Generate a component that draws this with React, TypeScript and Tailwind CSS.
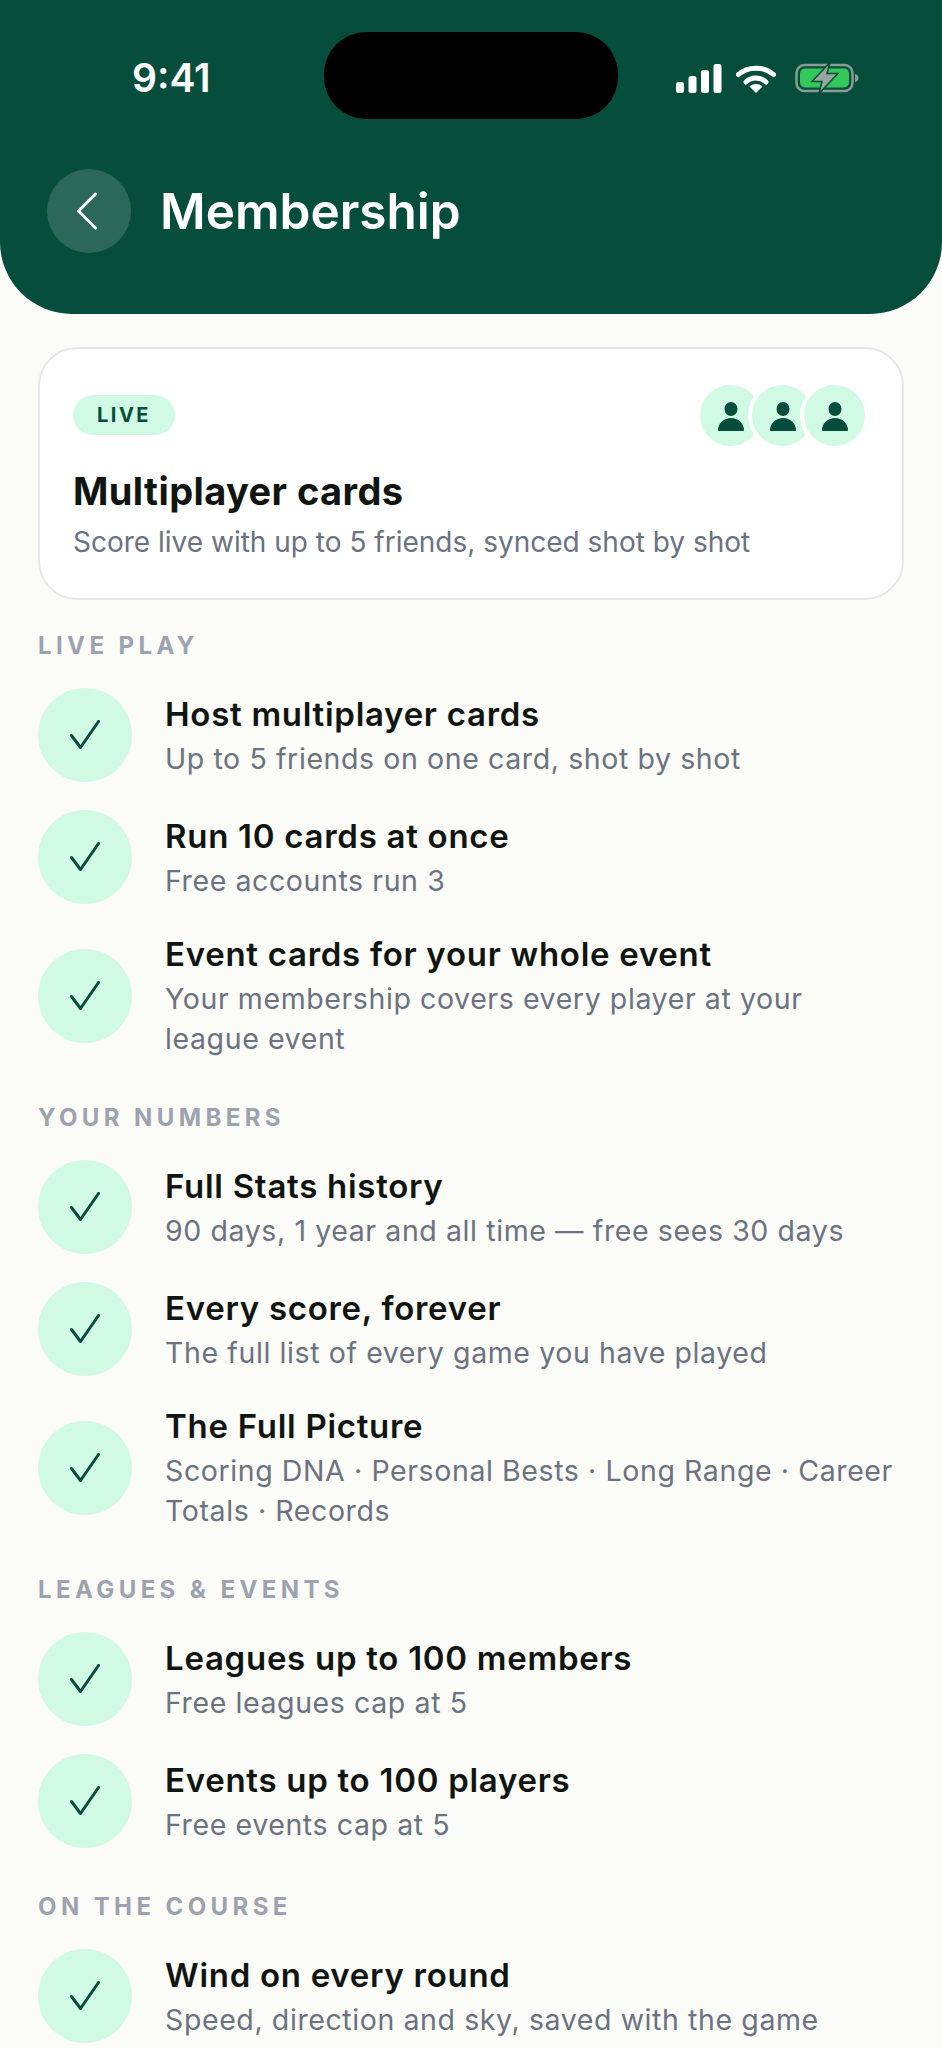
const sections = [
  {
    label: 'LIVE PLAY',
    rows: [
      { title: 'Host multiplayer cards', sub: 'Up to 5 friends on one card, shot by shot' },
      { title: 'Run 10 cards at once', sub: 'Free accounts run 3' },
      { title: 'Event cards for your whole event', sub: 'Your membership covers every player at your league event' },
    ],
  },
  {
    label: 'YOUR NUMBERS',
    rows: [
      { title: 'Full Stats history', sub: '90 days, 1 year and all time — free sees 30 days' },
      { title: 'Every score, forever', sub: 'The full list of every game you have played' },
      { title: 'The Full Picture', sub: 'Scoring DNA · Personal Bests · Long Range · Career Totals · Records' },
    ],
  },
  {
    label: 'LEAGUES & EVENTS',
    rows: [
      { title: 'Leagues up to 100 members', sub: 'Free leagues cap at 5' },
      { title: 'Events up to 100 players', sub: 'Free events cap at 5' },
    ],
  },
  {
    label: 'ON THE COURSE',
    rows: [{ title: 'Wind on every round', sub: 'Speed, direction and sky, saved with the game' }],
  },
];

function StatusIcons() {
  return (
    <div className="flex items-center">
      <svg width="46" height="29" viewBox="0 0 46 29" fill="#fff">
        <rect x="0" y="18" width="8" height="11" rx="2.500" />
        <rect x="12.500" y="12" width="8" height="17" rx="2.500" />
        <rect x="25" y="6" width="8" height="23" rx="2.500" />
        <rect x="37.500" y="0" width="8" height="29" rx="2.500" />
      </svg>
      <svg width="40" height="29" viewBox="0 0 40 29" fill="none" className="ml-[14px]">
        <path d="M2.500 10.500C11.500 2 28.500 2 37.500 10.500" stroke="#fff" strokeWidth="5" strokeLinecap="round" />
        <path d="M10 18C15.500 12.800 24.500 12.800 30 18" stroke="#fff" strokeWidth="5" strokeLinecap="round" />
        <path d="M20 29L13.500 22.500C17 19.300 23 19.300 26.500 22.500Z" fill="#fff" />
      </svg>
      <svg width="64" height="32" viewBox="0 0 64 32" fill="none" className="ml-[19px]">
        <rect x="1.500" y="3" width="56" height="26" rx="8" stroke="#8a9a94" strokeWidth="2.500" />
        <rect x="5" y="6.500" width="49" height="19" rx="5" fill="#34c759" />
        <path d="M60 12c2.500.5 3.500 2 3.500 4s-1 3.500-3.500 4z" fill="#8a9a94" />
        <path d="M35 .5L17 19.500h10L24 31.500L43 11.500H32z" fill="#9aa5a1" stroke="#064e3b" strokeWidth="1.500" />
      </svg>
    </div>
  );
}

function Person() {
  return (
    <svg width="28" height="30" viewBox="0 0 28 30" fill="#064e3b">
      <ellipse cx="14" cy="8" rx="6.500" ry="7" />
      <path d="M1 29c0-7 6-12 13-12s13 5 13 12c0 .5-.5 1-1 1H2c-.5 0-1-.5-1-1z" />
    </svg>
  );
}

function Avatars() {
  return (
    <div className="flex">
      {[0, 1, 2].map((i) => (
        <div
          key={i}
          className={`flex h-[69px] w-[69px] items-center justify-center rounded-full border-[4px] border-white bg-[#d1fae5] ${i > 0 ? 'ml-[-17px]' : ''}`}
        >
          <Person />
        </div>
      ))}
    </div>
  );
}

export default function App() {
  return (
    <div className="h-[2048px] w-[942px] overflow-hidden bg-[#fbfbf8] font-['Inter',sans-serif]">
      {/* Header */}
      <header className="h-[314px] rounded-b-[72px] bg-[#064e3b] pt-[32px]">
        <div className="flex items-start">
          <span className="ml-[132px] mt-[23px] w-[192px] text-[39px] leading-[46px] font-semibold text-white">9:41</span>
          <div className="h-[87px] w-[294px] rounded-[42px] bg-black" />
          <div className="ml-[58px] mt-[30px]">
            <StatusIcons />
          </div>
        </div>
        <div className="mt-[50px] flex items-center pl-[47px]">
          <div className="flex h-[84px] w-[84px] items-center justify-center rounded-full bg-white/15">
            <svg width="22" height="38" viewBox="0 0 22 38" fill="none" className="mr-[4px]">
              <path d="M19.500 2L2.500 19L19.500 36" stroke="#fff" strokeWidth="3" strokeLinecap="round" strokeLinejoin="round" />
            </svg>
          </div>
          <h1 className="ml-[29px] text-[49.500px] leading-[58px] font-semibold text-white">Membership</h1>
        </div>
      </header>

      <main className="px-[38px]">
        {/* Feature card */}
        <section className="mt-[33px] h-[253px] rounded-[39px] border-2 border-[#e5e7eb] bg-white pt-[32px] pr-[33px] pl-[33px]">
          <div className="flex items-start justify-between">
            <span className="mt-[14px] flex h-[40px] w-[102px] items-center justify-center rounded-full bg-[#d1fae5] text-[20px] font-bold tracking-[2.500px] text-[#064e3b]">
              LIVE
            </span>
            <Avatars />
          </div>
          <h2 className="mt-[18px] text-[38px] leading-[46px] font-bold tracking-[0.400px] text-[#111512]">Multiplayer cards</h2>
          <p className="mt-[8px] text-[28px] leading-[40px] text-[#6b7280]">Score live with up to 5 friends, synced shot by shot</p>
        </section>

        {sections.map((section, i) => (
          <section key={section.label} className={i === 0 ? 'mt-[32px]' : 'mt-[45px]'}>
            <h3 className="mb-[28px] text-[24px] leading-[28px] font-bold tracking-[4.400px] text-[#9ca3af]">{section.label}</h3>
            <div className="flex flex-col gap-[28px]">
              {section.rows.map((row) => (
                <div key={row.title} className="flex items-center gap-[33px]">
                  <div className="flex h-[94px] w-[94px] shrink-0 items-center justify-center rounded-full bg-[#d1fae5]">
                    <svg width="30" height="30" viewBox="0 0 30 30" fill="none">
                      <path d="M1.500 15.500L10.500 27.500L28.500 1.500" stroke="#064e3b" strokeWidth="3" strokeLinecap="round" strokeLinejoin="round" />
                    </svg>
                  </div>
                  <div className="min-w-0">
                    <div className="text-[33px] leading-[44px] font-semibold tracking-[0.720px] text-[#111512]">{row.title}</div>
                    <div className="mt-[3px] text-[28.500px] leading-[40px] tracking-[0.600px] text-[#6b7280]">{row.sub}</div>
                  </div>
                </div>
              ))}
            </div>
          </section>
        ))}
      </main>
    </div>
  );
}
